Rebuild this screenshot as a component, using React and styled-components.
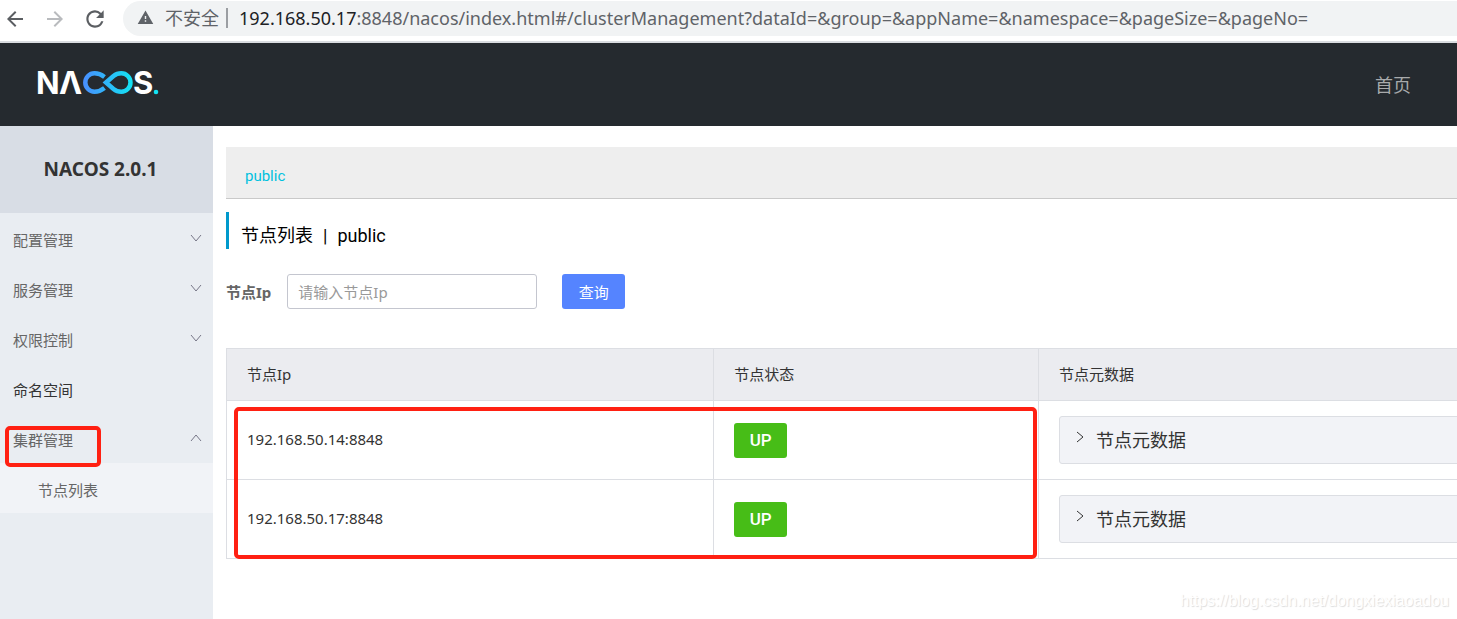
import React from "react";
import styled, { createGlobalStyle } from "styled-components";
import {
  MdArrowBack,
  MdArrowForward,
  MdRefresh,
  MdWarning,
} from "react-icons/md";

const menu = [
  { title: "配置管理", children: [] },
  { title: "服务管理", children: [] },
  { title: "权限控制", children: [] },
  { title: "命名空间" },
  { title: "集群管理", open: true, marked: true, children: ["节点列表"] },
];

const nodes = [
  { ip: "192.168.50.14:8848", state: "UP" },
  { ip: "192.168.50.17:8848", state: "UP" },
];

const Chevron = ({ points, ...rest }) => (
  <svg width='12' height='12' viewBox='0 0 12 12' fill='none' {...rest}>
    <polyline points={points} stroke='currentColor' />
  </svg>
);

const Logo = () => (
  <svg width='128' height='49' viewBox='0 0 128 49' role='img' aria-label='NACOS.'>
    <defs>
      <linearGradient id='loop' x1='46' x2='96' y1='0' y2='0' gradientUnits='userSpaceOnUse'>
        <stop offset='0' stopColor='#4a8cff' />
        <stop offset='1' stopColor='#13e3f3' />
      </linearGradient>
    </defs>
    <g fill='#fff' fontFamily='Inter, sans-serif' fontWeight='700' fontSize='31'>
      <text x='0' y='34'>N</text>
      <text x='23' y='34'>Λ</text>
      <text x='97' y='34'>S</text>
    </g>
    <g fill='none' stroke='url(#loop)' strokeWidth='4.5'>
      <path d='M68.500 17 C65 14.300 62.500 13.300 58.500 13.300 A9.2 9.2 0 0 0 58.500 31.700 C62.500 31.700 65 30.700 68.500 28' />
      <path d='M70 22.500 L77.500 16 C80 14 82.500 13.300 85.300 13.300 A9.2 9.2 0 0 1 85.300 31.700 C82.500 31.700 80 31 77.500 29 Z' />
    </g>
    <circle cx='120' cy='32' r='2.3' fill='#13e3f3' />
  </svg>
);

const App = () => {
  return (
    <Page>
      <GlobalStyle />
      <BrowserBar>
        <BarButton type='button' aria-label='back'>
          <MdArrowBack size={24} />
        </BarButton>
        <BarButton type='button' aria-label='forward' $disabled>
          <MdArrowForward size={24} />
        </BarButton>
        <BarButton type='button' aria-label='reload'>
          <MdRefresh size={26} />
        </BarButton>
        <Address>
          <MdWarning size={17} />
          <Insecure>不安全</Insecure>
          <Url>
            <b>192.168.50.17</b>
            :8848/nacos/index.html#/clusterManagement?dataId=&group=&appName=&namespace=&pageSize=&pageNo=
          </Url>
        </Address>
      </BrowserBar>

      <Header>
        <Logo />
        <HomeLink href='#home'>首页</HomeLink>
      </Header>

      <Body>
        <Sidebar>
          <Version>NACOS 2.0.1</Version>
          {menu.map(({ title, open, marked, children }) => (
            <React.Fragment key={title}>
              <MenuItem href='#menu' $dark={!children}>
                {title}
                {children && (
                  <Chevron points={open ? "1,9 6,3 11,9" : "1,3 6,9 11,3"} />
                )}
                {marked && <MenuMark />}
              </MenuItem>
              {open &&
                children.map((child) => (
                  <SubItem href='#nodes' key={child}>
                    {child}
                  </SubItem>
                ))}
            </React.Fragment>
          ))}
        </Sidebar>

        <Main>
          <Namespaces>
            <a href='#public'>public</a>
          </Namespaces>
          <Title>
            <span>节点列表</span>
            <span>|</span>
            <span>public</span>
          </Title>
          <Form onSubmit={(e) => e.preventDefault()}>
            <label htmlFor='ip'>节点Ip</label>
            <input id='ip' type='text' placeholder='请输入节点Ip' />
            <button type='submit'>查询</button>
          </Form>
          <TableArea>
            <Table>
              <thead>
                <tr>
                  <Th $width='30%'>节点Ip</Th>
                  <Th $width='20%'>节点状态</Th>
                  <Th $width='50%'>节点元数据</Th>
                </tr>
              </thead>
              <tbody>
                {nodes.map(({ ip, state }) => (
                  <tr key={ip}>
                    <td>{ip}</td>
                    <td>
                      <Tag>{state}</Tag>
                    </td>
                    <td>
                      <Collapse type='button'>
                        <Chevron points='3,1 9,6 3,11' />
                        节点元数据
                      </Collapse>
                    </td>
                  </tr>
                ))}
              </tbody>
            </Table>
            <TableMark />
          </TableArea>
        </Main>
      </Body>
      <Watermark>https://blog.csdn.net/dongxiexiaoadou</Watermark>
    </Page>
  );
};

const GlobalStyle = createGlobalStyle`
  * {
    box-sizing: border-box;
  }
  body {
    margin: 0;
    background: #fff;
    color: #333;
    font: 15px/20px "Noto Sans", "Noto Sans CJK SC", sans-serif;
  }
  button, input {
    font: inherit;
  }
  a {
    color: inherit;
    text-decoration: none;
  }
`;

const Page = styled.div`
  position: relative;
  display: flex;
  flex-direction: column;
  min-height: 100vh;
  overflow: hidden;
`;

const BrowserBar = styled.div`
  display: flex;
  align-items: center;
  gap: 16px;
  height: 43px;
  padding: 0 0 4px 3px;
  border-bottom: 2px solid #d9dce0;
`;

const BarButton = styled.button`
  display: flex;
  justify-content: center;
  width: 24px;
  padding: 0;
  border: 0;
  background: none;
  color: ${({ $disabled }) => ($disabled ? "#b9bbbe" : "#5b5e62")};
  svg {
    flex: none;
  }
`;

const Address = styled.div`
  display: flex;
  flex: 1;
  align-items: center;
  height: 35px;
  padding: 0 0 2px 14px;
  border-radius: 18px 0 0 18px;
  background: #f1f3f4;
  color: #5f6368;
  font-size: 18px;
  white-space: nowrap;
`;

const Insecure = styled.span`
  margin-left: 11px;
  padding-right: 7px;
  border-right: 2px solid #9b9ea2;
`;

const Url = styled.span`
  margin-left: 11px;
  b {
    color: #202124;
    font-weight: 400;
  }
`;

const Header = styled.header`
  display: flex;
  align-items: center;
  justify-content: space-between;
  height: 83px;
  padding: 0 46px 0 36px;
  background: #252a2f;
`;

const HomeLink = styled.a`
  color: #a8aaac;
  font-size: 18px;
`;

const Body = styled.div`
  display: flex;
  flex: 1;
`;

const Sidebar = styled.nav`
  flex: none;
  width: 213px;
  background: #e9edf2;
`;

const Version = styled.h1`
  height: 87px;
  margin: 0;
  padding-right: 12px;
  background: #d8dde5;
  font-size: 19px;
  line-height: 87px;
  text-align: center;
`;

const MenuItem = styled.a`
  position: relative;
  display: flex;
  align-items: center;
  justify-content: space-between;
  height: 50px;
  padding: 4px 11px 0 13px;
  color: ${({ $dark }) => ($dark ? "#333" : "#666")};
  svg {
    color: #778;
    margin-bottom: 4px;
  }
`;

const SubItem = styled.a`
  display: block;
  padding: 17px 38px 13px;
  background: #f1f3f7;
  color: #666;
`;

/* hand-drawn highlight frames that lie over the console */
const Mark = styled.span`
  position: absolute;
  border: 4px solid #ff2012;
  border-radius: 5px;
  pointer-events: none;
`;

const MenuMark = styled(Mark)`
  top: 13px;
  left: 5px;
  width: 96px;
  height: 41px;
  z-index: 1;
`;

const TableMark = styled(Mark)`
  top: 59px;
  bottom: 0;
  left: 8px;
  width: calc(50% - 9px);
`;

const Main = styled.main`
  flex: 1;
  min-width: 0;
  padding: 21px 0 60px 13px;
`;

const Namespaces = styled.div`
  padding: 19px 19px 12px;
  border-bottom: 1px solid #c9c9c9;
  background: #eee;
  color: #00c1de;
  font-family: Roboto, sans-serif;
`;

const Title = styled.h2`
  display: flex;
  gap: 10px;
  height: 37px;
  margin: 13px 0 25px;
  padding: 11px 0 0 12px;
  border-left: 3px solid #09c;
  color: #000;
  font-family: Roboto, "Noto Sans CJK SC", sans-serif;
  font-size: 18px;
  font-weight: 400;
  line-height: 26px;
`;

const Form = styled.form`
  display: flex;
  align-items: center;
  height: 35px;
  label {
    color: #666;
    font-weight: 700;
  }
  input {
    width: 250px;
    height: 35px;
    margin: 0 25px 0 16px;
    padding: 0 10px;
    border: 1px solid #c4c6cf;
    border-radius: 3px;
  }
  input::placeholder {
    color: #999;
  }
  button {
    width: 63px;
    height: 35px;
    padding: 0;
    border: 0;
    border-radius: 3px;
    background: #5584ff;
    color: #fff;
  }
`;

/* wider than the window, the last column runs off to the right */
const TableArea = styled.div`
  position: relative;
  width: 132%;
  margin-top: 39px;
`;

const Table = styled.table`
  width: 100%;
  border-collapse: collapse;
  table-layout: fixed;
  td,
  th {
    padding: 0 20px;
    border: 1px solid #dcdee3;
    text-align: left;
  }
  td {
    height: 79px;
  }
  td:first-child,
  th {
    padding-bottom: 2px;
  }
`;

const Th = styled.th`
  width: ${({ $width }) => $width};
  height: 52px;
  background: #ebecf0;
  font-weight: 400;
`;

const Tag = styled.span`
  display: inline-block;
  width: 53px;
  border-radius: 3px;
  background: #47bd17;
  color: #fff;
  font: 500 17px/35px Roboto, sans-serif;
  text-align: center;
  vertical-align: middle;
`;

const Collapse = styled.button`
  display: flex;
  align-items: center;
  gap: 10px;
  width: 100%;
  height: 48px;
  padding: 0 14px;
  border: 1px solid #dcdee3;
  border-radius: 3px;
  background: #f2f3f7;
  color: #333;
  font-size: 18px;
  svg {
    margin-bottom: 6px;
  }
`;

const Watermark = styled.span`
  position: absolute;
  right: 8px;
  bottom: 8px;
  color: #fff;
  font: 16px/20px "Liberation Sans", sans-serif;
  text-shadow: 1px 1px 1px #ddd;
`;

export default App;
